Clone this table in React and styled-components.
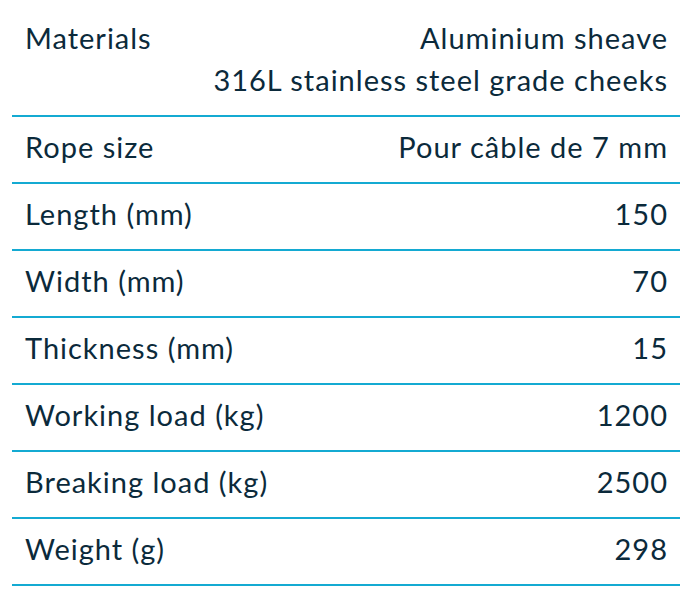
import styled, { createGlobalStyle } from "styled-components";

const GlobalStyle = createGlobalStyle`
  body {
    margin: 0;
    background: #ffffff;
    font-family: Lato, "Noto Sans", sans-serif;
    color: #0b2a3b;
  }
`;

const Wrapper = styled.div`
  padding: 8px 20px 0 12px;
`;

const Table = styled.div`
  display: flex;
  flex-direction: column;
`;

const Row = styled.div`
  display: flex;
  justify-content: space-between;
  align-items: flex-start;
  padding: 9px 13px 14px;
  border-bottom: 2px solid #14aad2;
  font-size: 29px;
  line-height: 42px;
  letter-spacing: 1px;
`;

const Label = styled.div`
  white-space: nowrap;
`;

const Value = styled.div`
  text-align: right;
  white-space: nowrap;
  margin-right: -1px;
`;

const specs = [
  { label: "Materials", value: ["Aluminium sheave", "316L stainless steel grade cheeks"] },
  { label: "Rope size", value: ["Pour câble de 7 mm"] },
  { label: "Length (mm)", value: ["150"] },
  { label: "Width (mm)", value: ["70"] },
  { label: "Thickness (mm)", value: ["15"] },
  { label: "Working load (kg)", value: ["1200"] },
  { label: "Breaking load (kg)", value: ["2500"] },
  { label: "Weight (g)", value: ["298"] },
];

const App = () => {
  return (
    <>
      <GlobalStyle />
      <Wrapper>
        <Table>
          {specs.map((spec) => (
            <Row key={spec.label}>
              <Label>{spec.label}</Label>
              <Value>
                {spec.value.map((line) => (
                  <div key={line}>{line}</div>
                ))}
              </Value>
            </Row>
          ))}
        </Table>
      </Wrapper>
    </>
  );
};

export default App;
